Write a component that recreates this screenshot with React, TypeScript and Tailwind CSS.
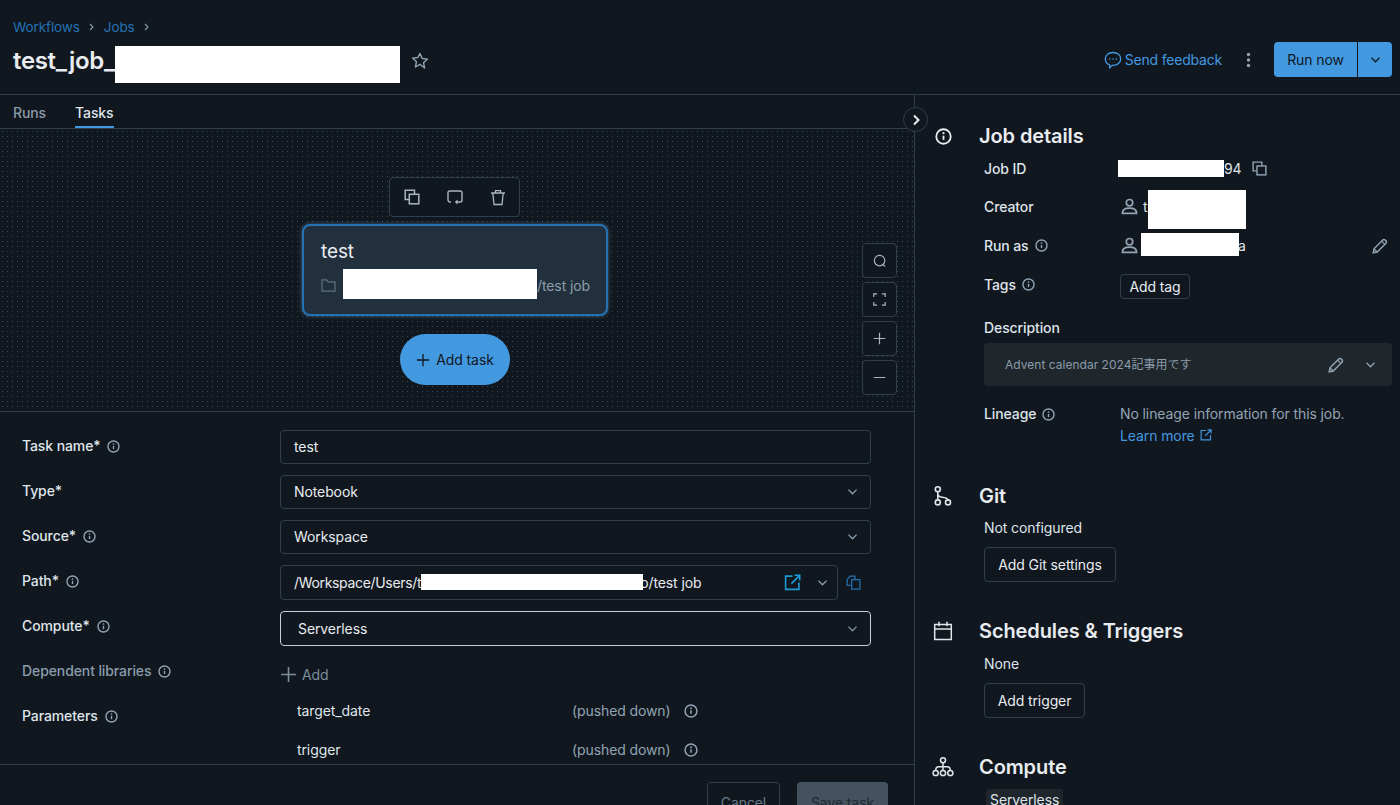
import React from "react";

type IP = { className?: string };

const Info = ({ className = "w-[13px] h-[13px] text-[#92a4b3]" }: IP) => (
  <svg viewBox="0 0 16 16" fill="none" className={className}>
    <circle cx="8" cy="8" r="6.800" stroke="currentColor" strokeWidth="1.700" />
    <path d="M8 7.200v4" stroke="currentColor" strokeWidth="1.700" />
    <circle cx="8" cy="4.900" r="1.050" fill="currentColor" />
  </svg>
);

const Chevron = ({ className = "w-[13px] h-[13px] text-[#8a9caa] shrink-0" }: IP) => (
  <svg viewBox="0 0 16 16" fill="none" className={className}>
    <path d="M3 5.700 8 10.700l5-5" stroke="currentColor" strokeWidth="1.700" />
  </svg>
);

const Copy = ({ className = "w-[16px] h-[16px] text-[#92a4b3]" }: IP) => (
  <svg viewBox="0 0 16 16" fill="none" className={className}>
    <path d="M5 10.500H1.200V1.200h9.300V5" stroke="currentColor" strokeWidth="1.500" />
    <rect x="5.300" y="5.300" width="9.500" height="9.500" stroke="currentColor" strokeWidth="1.500" />
  </svg>
);

const Pencil = ({ className = "w-[16px] h-[16px] text-[#92a4b3]" }: IP) => (
  <svg viewBox="0 0 16 16" fill="none" className={className}>
    <path d="M1.300 14.700 2 10.800 10.800 2a1.600 1.600 0 0 1 2.300 0l.9.9a1.600 1.600 0 0 1 0 2.300L5.200 14z" stroke="currentColor" strokeWidth="1.500" />
    <path d="m2 10.800 3.200 3.200M9.600 3.200l3.200 3.200" stroke="currentColor" strokeWidth="1.200" />
  </svg>
);

const Person = ({ className = "w-[18px] h-[18px] text-[#92a4b3]" }: IP) => (
  <svg viewBox="0 0 18 18" fill="none" className={className}>
    <circle cx="9" cy="5" r="3.400" stroke="currentColor" strokeWidth="1.800" />
    <path d="M1.500 16.200c0-3.600 3-5.400 7.500-5.400s7.500 1.800 7.500 5.400z" stroke="currentColor" strokeWidth="1.800" />
  </svg>
);

const External = ({ className = "w-[13px] h-[13px] text-[#4299e0]" }: IP) => (
  <svg viewBox="0 0 16 16" fill="none" className={className}>
    <path d="M8 2H1.500v12.500H14V8" stroke="currentColor" strokeWidth="1.500" />
    <path d="M10 1.200h4.800V6M14.500 1.500 7 9" stroke="currentColor" strokeWidth="1.500" />
  </svg>
);

const Plus = ({ className = "w-[14px] h-[14px]" }: IP) => (
  <svg viewBox="0 0 16 16" fill="none" className={className}>
    <path d="M8 1v14M1 8h14" stroke="currentColor" strokeWidth="1.500" />
  </svg>
);

const Redact = ({ className = "" }: IP) => <span className={`inline-block bg-white shrink-0 ${className}`} />;

const Field = ({ children, className = "" }: { children: React.ReactNode; className?: string }) => (
  <div className={`rounded-[4px] border flex items-center pb-[1px] text-[14px] text-[#e8ecf0] whitespace-nowrap ${className}`}>
    {children}
  </div>
);

const Label = ({ text, info = true, dim = false, shift = "-translate-y-[2px]" }: { text: string; info?: boolean; dim?: boolean; shift?: string }) => (
  <div className={`h-[34px] flex items-center gap-[7px] text-[14px] font-medium ${shift} ${dim ? "text-[#8a9caa]" : "text-[#dfe5ea]"}`}>
    <span>{text}</span>
    {info && <Info className="w-[13px] h-[13px] text-[#92a4b3] mt-[3px]" />}
  </div>
);

const ZoomBtn = ({ children }: { children: React.ReactNode }) => (
  <div className="w-[35px] h-[35px] rounded-[4px] border border-[#303f4d] bg-[#11171f] flex items-center justify-center text-[#a9b6c1]">
    {children}
  </div>
);

const Section = ({ icon, title, children, className = "" }: { icon: React.ReactNode; title: string; children: React.ReactNode; className?: string }) => (
  <section className={className}>
    <div className="flex items-center h-[28px] pl-[18px]">
      <span className="w-[20px] h-[20px] flex items-center justify-center text-[#dfe5ea]">{icon}</span>
      <h2 className="ml-[26px] text-[20px] leading-[28px] font-semibold text-[#e8ecf0] tracking-[-0.1px]">{title}</h2>
    </div>
    <div className="pl-[69px]">{children}</div>
  </section>
);

const OutlineBtn = ({ children, className = "" }: { children: React.ReactNode; className?: string }) => (
  <div className={`inline-flex items-center justify-center rounded-[4px] border border-[#303f4d] text-[14px] text-[#e8ecf0] ${className}`}>
    {children}
  </div>
);

const DetailRow = ({ label, info, children, className = "" }: { label: string; info?: boolean; children?: React.ReactNode; className?: string }) => (
  <div className={`flex items-center ${className}`}>
    <div className="w-[136px] flex items-center gap-[6px] text-[14px] font-medium text-[#dfe5ea]">
      <span>{label}</span>
      {info && <Info />}
    </div>
    <div className="flex-1 flex items-center text-[14px] text-[#dfe5ea] min-w-0">{children}</div>
  </div>
);

const Crumb = () => (
  <svg viewBox="0 0 8 8" className="w-[8px] h-[8px] mx-[8px] text-[#8a9caa]" fill="none"><path d="m2 1 3 3-3 3" stroke="currentColor" strokeWidth="1.100" /></svg>
);

export default function App() {
  return (
    <div className="w-[1400px] h-[805px] overflow-hidden bg-[#11171f] text-[#e8ecf0] tracking-[-0.1px] font-['Inter','Noto_Sans_CJK_JP',sans-serif] flex flex-col">
      <header className="h-[95px] shrink-0 border-b border-[#303f4d] px-[13px] pt-[13px] flex flex-col">
        <div className="h-[28px] flex items-center text-[13.5px] text-[#2272b4]">
          <span>Workflows</span>
          <Crumb />
          <span>Jobs</span>
          <Crumb />
        </div>
        <div className="flex items-center h-[29px] mt-[5px]">
          <h1 className="-mt-[1px] text-[24px] leading-[29px] font-semibold text-[#e8ecf0] tracking-[-0.33px]">test_job_</h1>
          <Redact className="w-[285px] h-[37px] self-start" />
          <svg viewBox="0 0 18 18" fill="none" className="ml-[11px] w-[18px] h-[18px] text-[#92a4b3]">
            <path d="m9 1.600 2.200 4.900 5.300.6-4 3.600 1.100 5.300L9 12.300l-4.600 2.700 1.100-5.300-4-3.600 5.300-.6z" stroke="currentColor" strokeWidth="1.400" strokeLinejoin="round" />
          </svg>
          <div className="ml-auto flex items-center -mr-[5px] -mt-[2px]">
            <svg viewBox="0 0 18 18" fill="none" className="w-[18px] h-[18px] text-[#4299e0]">
              <path d="M9 1.500c4.400 0 7.700 2.800 7.700 6.400s-3.300 6.400-7.700 6.400h-.6l-2.700 2.400v-2.900C3.200 13 1.300 10.800 1.300 7.900 1.300 4.300 4.600 1.500 9 1.500z" stroke="currentColor" strokeWidth="1.300" />
              <circle cx="5.800" cy="8" r=".8" fill="currentColor" /><circle cx="9" cy="8" r=".8" fill="currentColor" /><circle cx="12.200" cy="8" r=".8" fill="currentColor" />
            </svg>
            <span className="ml-[3px] text-[14px] text-[#4299e0] tracking-[-0.2px]">Send feedback</span>
            <svg viewBox="0 0 4 16" className="ml-[24px] w-[5px] h-[16px] text-[#92a4b3]" fill="currentColor">
              <circle cx="2" cy="2.500" r="1.700" /><circle cx="2" cy="8" r="1.700" /><circle cx="2" cy="13.500" r="1.700" />
            </svg>
            <div className="ml-[23px] flex h-[35px] rounded-[4px] bg-[#4299e0] text-[#11171f] text-[14px]">
              <span className="w-[84px] flex items-center justify-center border-r border-[#11171f]">Run now</span>
              <span className="w-[34px] flex items-center justify-center"><Chevron className="w-[13px] h-[13px] text-[#11171f]" /></span>
            </div>
          </div>
        </div>
      </header>

      <div className="flex flex-1 min-h-0">
        <main className="relative w-[915px] shrink-0 border-r border-[#303f4d] flex flex-col">
          <nav className="h-[33px] shrink-0 flex items-end px-[13px] gap-[29px] text-[14px] font-medium">
            <span className="h-[33px] pt-[2px] flex items-center text-[#8a9caa]">Runs</span>
            <span className="h-[33px] pt-[4px] flex items-center text-[#dfe5ea] border-b-[2px] border-[#4299e0]">Tasks</span>
          </nav>

          <div className="relative h-[284px] shrink-0 border-y border-[#303f4d] bg-[radial-gradient(#3a4753_0.7px,transparent_0.8px)] bg-[size:5px_5px] flex flex-col items-center pt-[48px] pr-[4px]">
            <div className="h-[40px] w-[131px] -translate-x-[1px] rounded-[4px] border border-[#303f4d] bg-[#11171f] flex items-center justify-between pl-[14px] pr-[13px] text-[#92a4b3]">
              <Copy className="w-[16px] h-[16px] text-[#a9b6c1]" />
              <svg viewBox="0 0 16 16" fill="none" className="w-[16px] h-[16px] text-[#a9b6c1]">
                <path d="M4 13H3a2 2 0 0 1-2-2V4a2 2 0 0 1 2-2h10a2 2 0 0 1 2 2v7a2 2 0 0 1-2 2h-3" stroke="currentColor" strokeWidth="1.400" />
                <path d="M10.500 10.500 7.800 13l2.700 2.500z" fill="currentColor" />
              </svg>
              <svg viewBox="0 0 16 16" fill="none" className="w-[16px] h-[17px] text-[#a9b6c1]">
                <path d="M1 3.500h14M5.500 3.500V1.200h5v2.300M2.800 3.500 4 15h8l1.200-11.500" stroke="currentColor" strokeWidth="1.300" />
              </svg>
            </div>
            <div className="mt-[7px] w-[306px] h-[92px] rounded-[8px] border-2 border-[#2272b4] bg-[#22303d] shadow-[0_0_4px_rgba(120,170,210,0.5)] pl-[17px] pr-[18px] flex flex-col">
              <div className="mt-[13px] text-[19px] leading-[25px] text-[#e8ecf0]">test</div>
              <div className="mt-[5px] flex items-center text-[14px] text-[#8a9caa] whitespace-nowrap">
                <svg viewBox="0 0 16 14" fill="none" className="mt-[3px] shrink-0 w-[15px] h-[13px] text-[#5f7281]">
                  <path d="M1 1h5l1.600 2H15v10H1z" stroke="currentColor" strokeWidth="1.300" />
                </svg>
                <Redact className="relative z-10 ml-[7px] w-[194px] h-[30px]" />
                <span className="ml-auto mt-[3px] -translate-x-0 shrink-0 w-[51px]">/test job</span>
              </div>
            </div>
            <div className="mt-[18px] w-[110px] h-[51px] rounded-full bg-[#4299e0] flex items-center justify-center gap-[6px] text-[14px] text-[#11171f]">
              <Plus className="w-[14px] h-[14px]" />
              <span>Add task</span>
            </div>
            <div className="absolute top-[114px] left-[862px] flex flex-col gap-[4px]">
              <ZoomBtn>
                <svg viewBox="0 0 16 16" fill="none" className="w-[14px] h-[14px]"><circle cx="7.500" cy="7.500" r="6" stroke="currentColor" strokeWidth="1.300" /><path d="m11.500 12 2.500 2.500" stroke="currentColor" strokeWidth="1.300" /></svg>
              </ZoomBtn>
              <ZoomBtn>
                <svg viewBox="0 0 16 16" fill="none" className="w-[13px] h-[13px]"><path d="M1 5V1h4M11 1h4v4M15 11v4h-4M5 15H1v-4" stroke="currentColor" strokeWidth="1.500" /></svg>
              </ZoomBtn>
              <ZoomBtn><Plus className="w-[13px] h-[13px]" /></ZoomBtn>
              <ZoomBtn>
                <svg viewBox="0 0 16 16" fill="none" className="w-[13px] h-[13px]"><path d="M1 8h14" stroke="currentColor" strokeWidth="1.300" /></svg>
              </ZoomBtn>
            </div>
          </div>

          <div className="flex-1 min-h-0 overflow-hidden pl-[22px] pt-[18px]">
            <div className="grid grid-cols-[258px_591px] gap-y-[11px]">
              <Label text="Task name*" />
              <Field className="h-[34px] border-[#303f4d] pl-[13px]">test</Field>
              <Label text="Type*" info={false} />
              <Field className="h-[34px] border-[#303f4d] pl-[13px] pr-[11px] justify-between">Notebook<Chevron /></Field>
              <Label text="Source*" />
              <Field className="h-[34px] border-[#303f4d] pl-[13px] pr-[11px] justify-between">Workspace<Chevron /></Field>
              <Label text="Path*" />
              <div className="flex items-center">
                <Field className="w-[558px] h-[35px] border-[#303f4d] pl-[13px] pr-[8px]">
                  <span className="tracking-[-0.33px]">/Workspace/Users/t</span>
                  <Redact className="relative z-10 w-[222px] h-[16px]" />
                  <span className="-ml-[3px]">o/test job</span>
                  <External className="ml-auto shrink-0 w-[17px] h-[17px] text-[#1c9bd8]" />
                  <Chevron className="ml-[15px] shrink-0 w-[13px] h-[13px] text-[#8a9caa]" />
                </Field>
                <svg viewBox="0 0 16 16" fill="none" className="ml-[8px] w-[15px] h-[15px] text-[#2272b4]">
                  <path d="M5 11H1.200V5l3-3.800h5.300V5" stroke="currentColor" strokeWidth="1.300" />
                  <path d="M6 5h8.800v10H6z" stroke="currentColor" strokeWidth="1.300" />
                </svg>
              </div>
              <Label text="Compute*" shift="-translate-y-[3px]" />
              <Field className="h-[35px] border-[#c8d0d7] pl-[17px] pr-[11px] justify-between">Serverless<Chevron className="w-[13px] h-[13px] text-[#7d8e9c]" /></Field>
              <Label text="Dependent libraries" dim shift="-translate-y-[4px]" />
              <div className="h-[34px] flex items-center gap-[5px] text-[14px] text-[#7d8e9c]"><Plus className="w-[17px] h-[17px]" /><span>Add</span></div>
              <Label text="Parameters" shift="-translate-y-[4px]" />
              <div className="pl-[17px] text-[14px] text-[#dfe5ea] -mt-[11px]">
                <div className="h-[39px] flex items-center">
                  <span className="w-[275px]">target_date</span>
                  <span className="w-[112px] text-[#92a4b3]">(pushed down)</span>
                  <Info className="w-[14px] h-[14px] text-[#92a4b3]" />
                </div>
                <div className="h-[39px] flex items-center">
                  <span className="w-[275px]">trigger</span>
                  <span className="w-[112px] text-[#92a4b3]">(pushed down)</span>
                  <Info className="w-[14px] h-[14px] text-[#92a4b3]" />
                </div>
              </div>
            </div>
          </div>

          <footer className="h-[41px] shrink-0 border-t border-[#303f4d] flex justify-end gap-[17px] pr-[26px] pt-[17px] text-[14px]">
            <div className="w-[73px] h-[40px] rounded-[4px] border border-[#303f4d] flex items-center justify-center text-[#6b7d8b]">Cancel</div>
            <div className="w-[91px] h-[40px] rounded-[4px] bg-[#44525f] flex items-center justify-center text-[#1f2933]">Save task</div>
          </footer>

          <div className="absolute top-[12px] left-[903px] w-[25px] h-[25px] rounded-full bg-[#11171f] border border-[#303f4d] flex items-center justify-center text-[#e8ecf0]">
            <svg viewBox="0 0 12 12" fill="none" className="w-[12px] h-[12px]"><path d="m4 1.500 4.500 4.500L4 10.500" stroke="currentColor" strokeWidth="2" /></svg>
          </div>
        </main>

        <aside className="flex-1 min-w-0 overflow-hidden pt-[27px]">
          <Section title="Job details" icon={<Info className="w-[17px] h-[17px] text-[#e8ecf0]" />}>
            <div className="-mt-[1px]">
              <DetailRow label="Job ID" className="h-[38px]">
                <Redact className="-ml-[2px] w-[106px] h-[17px]" />
                <span>94</span>
                <Copy className="ml-[10px] w-[15px] h-[15px] text-[#92a4b3]" />
              </DetailRow>
              <DetailRow label="Creator" className="h-[39px]">
                <Person className="w-[17px] h-[17px] text-[#92a4b3] ml-[1px]" />
                <span className="ml-[5px] w-[6px]">t</span>
                <Redact className="-ml-[1px] w-[98px] h-[39px] translate-y-[3px]" />
              </DetailRow>
              <DetailRow label="Run as" info className="h-[39px] pr-[12px]">
                <Person className="w-[17px] h-[17px] text-[#92a4b3] ml-[1px]" />
                <Redact className="ml-[3px] w-[98px] h-[23px] -translate-y-[1px]" />
                <span className="-ml-[1px]">a</span>
                <Pencil className="ml-auto w-[16px] h-[16px] text-[#92a4b3]" />
              </DetailRow>
              <DetailRow label="Tags" info className="h-[39px]">
                <OutlineBtn className="h-[25px] w-[70px] translate-y-[2px]">Add tag</OutlineBtn>
              </DetailRow>
            </div>
            <div className="mt-[14px] text-[14px] leading-[20px] font-medium text-[#dfe5ea]">Description</div>
            <div className="mt-[5px] w-[408px] h-[43px] rounded-[4px] bg-[#1f272d] flex items-center pl-[21px] pr-[15px] text-[12px] tracking-[0.02px] text-[#8a9caa]">
              <span>Advent calendar 2024記事用です</span>
              <Pencil className="ml-auto w-[16px] h-[16px] text-[#92a4b3]" />
              <Chevron className="ml-[20px] w-[13px] h-[13px] text-[#92a4b3]" />
            </div>
            <div className="mt-[18px] flex items-start text-[14px] leading-[20px]">
              <div className="w-[136px] flex items-center gap-[6px] font-medium text-[#dfe5ea]"><span>Lineage</span><Info /></div>
              <div className="text-[#92a4b3]">
                <div>No lineage information for this job.</div>
                <div className="mt-[2px] flex items-center gap-[5px] text-[#4299e0]">Learn more<External className="w-[12px] h-[12px] -mt-[3px] text-[#4299e0]" /></div>
              </div>
            </div>
          </Section>

          <Section
            className="mt-[36px]"
            title="Git"
            icon={
              <svg viewBox="0 0 18 20" fill="none" className="w-[18px] h-[20px] shrink-0">
                <circle cx="3.800" cy="3.300" r="2.500" stroke="currentColor" strokeWidth="1.600" />
                <circle cx="3.800" cy="16.400" r="2.500" stroke="currentColor" strokeWidth="1.600" />
                <circle cx="14" cy="16.400" r="2.500" stroke="currentColor" strokeWidth="1.600" />
                <path d="M3.800 6v7.800M3.800 8c0 2.500 2.500 3 4.500 3.300 3 .4 5 .9 5.700 2.500" stroke="currentColor" strokeWidth="1.600" />
              </svg>
            }
          >
            <div className="mt-[8px] text-[14px] leading-[20px] text-[#dfe5ea]">Not configured</div>
            <OutlineBtn className="mt-[9px] h-[35px] w-[132px]">Add Git settings</OutlineBtn>
          </Section>

          <Section
            className="mt-[35px]"
            title="Schedules & Triggers"
            icon={
              <svg viewBox="0 0 20 20" fill="none" className="w-[20px] h-[20px] shrink-0">
                <path d="M1.700 3.500h16.600v15H1.700zM1.700 8h16.600M6 .8v4.400M14 .8v4.400" stroke="currentColor" strokeWidth="1.500" />
              </svg>
            }
          >
            <div className="mt-[9px] text-[14px] leading-[20px] text-[#dfe5ea]">None</div>
            <OutlineBtn className="mt-[9px] h-[35px] w-[101px]">Add trigger</OutlineBtn>
          </Section>

          <Section
            className="mt-[35px]"
            title="Compute"
            icon={
              <svg viewBox="0 0 22 20" fill="none" className="w-[22px] h-[20px] shrink-0">
                <circle cx="11" cy="3.300" r="2.500" stroke="currentColor" strokeWidth="1.500" />
                <circle cx="3.700" cy="16" r="2.600" stroke="currentColor" strokeWidth="1.500" />
                <circle cx="11" cy="16" r="2.600" stroke="currentColor" strokeWidth="1.500" />
                <circle cx="18.300" cy="16" r="2.600" stroke="currentColor" strokeWidth="1.500" />
                <path d="M11 6v7.400M3.700 13.400c0-2.600 1-3.700 3-3.700h8.600c2 0 3 1.100 3 3.700" stroke="currentColor" strokeWidth="1.500" />
              </svg>
            }
          >
            <div className="mt-[8px] ml-[2px] inline-block px-[4px] h-[24px] leading-[22px] rounded-[4px] bg-[#1f272d] text-[14px] text-[#dfe5ea]">Serverless</div>
          </Section>
        </aside>
      </div>
    </div>
  );
}
